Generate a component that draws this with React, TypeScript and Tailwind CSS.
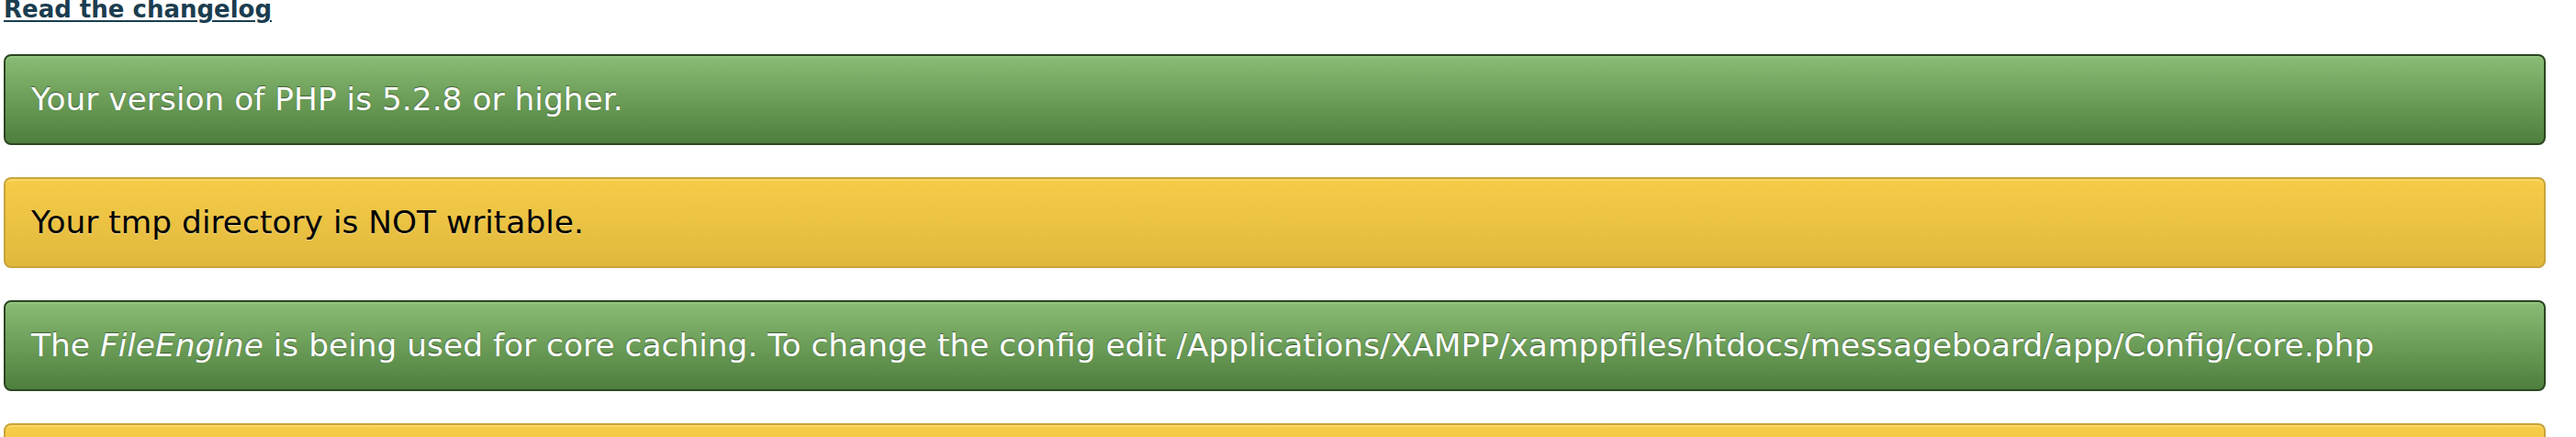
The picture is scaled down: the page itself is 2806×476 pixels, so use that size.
import React from 'react';

type Tone = 'success' | 'notice';

const toneClass: Record<Tone, string> = {
    success:
        'border-[#2b4621] bg-gradient-to-b from-[#89bc74] to-[#4e7f3d] text-white shadow-[inset_0_2px_0_#93c480] [text-shadow:0_-1px_1px_rgba(0,0,0,0.45)]',
    notice:
        'border-[#c7a43a] bg-gradient-to-b from-[#f6cc48] to-[#e0b83c] text-black shadow-[inset_0_2px_0_#f9d866] [text-shadow:0_1px_0_rgba(255,255,255,0.45)]',
};

const Message = ({ tone, children }: { tone: Tone; children?: React.ReactNode }) => (
    <div
        className={`h-[99px] flex items-center rounded-[8px] border-2 px-[28px] text-[34.4px] leading-[45px] ${toneClass[tone]}`}
    >
        <span>{children}</span>
    </div>
);

export default function App() {
    return (
        <div
            className="min-h-screen bg-white pl-[4px] pr-[33px] overflow-hidden"
            style={{ fontFamily: '"DejaVu Sans", "Liberation Sans", sans-serif' }}
        >
            <a
                href="#"
                className="block -mt-[7px] h-[66px] text-[26px] leading-[34px] font-bold text-[#1b3d4f] underline decoration-2 underline-offset-[3px]"
            >
                Read the changelog
            </a>
            <div className="flex flex-col gap-[35px]">
                <Message tone="success">Your version of PHP is 5.2.8 or higher.</Message>
                <Message tone="notice">Your tmp directory is NOT writable.</Message>
                <Message tone="success">
                    The <em>FileEngine</em> is being used for core caching. To change the config edit
                    /Applications/XAMPP/xamppfiles/htdocs/messageboard/app/Config/core.php
                </Message>
                <Message tone="notice">Your database configuration file is NOT present.</Message>
            </div>
        </div>
    );
}
